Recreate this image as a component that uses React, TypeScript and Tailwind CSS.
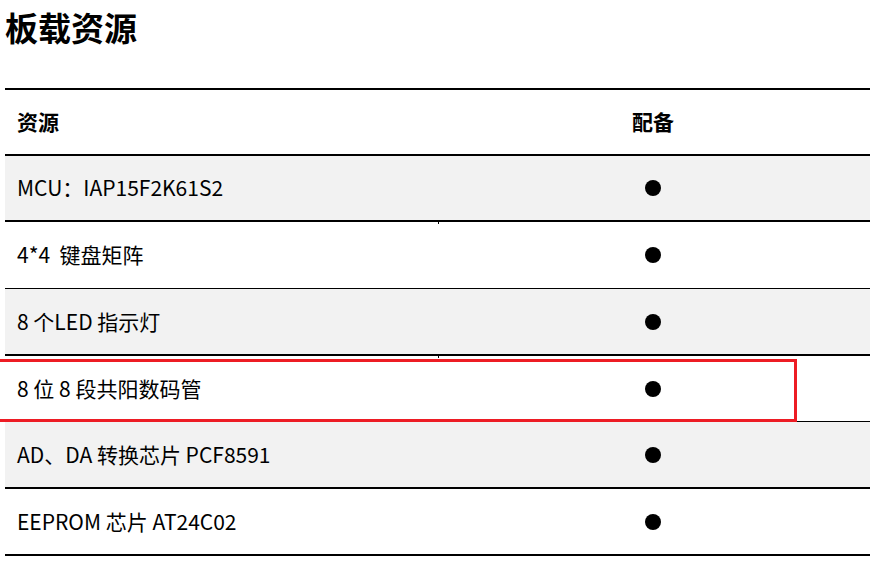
import React from 'react';

type Row = { name: string; h: string; border: string; bg: string };

const rows: Row[] = [
  { name: 'MCU：IAP15F2K61S2', h: 'h-[66px]', border: 'border-b-2', bg: 'bg-[#f2f2f2]' },
  { name: '4*4  键盘矩阵', h: 'h-[67px]', border: 'border-b', bg: 'bg-white' },
  { name: '8 个LED 指示灯', h: 'h-[67px]', border: 'border-b-2', bg: 'bg-[#f2f2f2]' },
  { name: '8 位 8 段共阳数码管', h: 'h-[66px]', border: 'border-b', bg: 'bg-white' },
  { name: 'AD、DA 转换芯片 PCF8591', h: 'h-[67px]', border: 'border-b-2', bg: 'bg-[#f2f2f2]' },
  { name: 'EEPROM 芯片 AT24C02', h: 'h-[67px]', border: 'border-b-2', bg: 'bg-white' },
];

export default function App() {
  return (
    <div
      className="relative w-[889px] h-[561px] overflow-hidden bg-white text-black"
      style={{ fontFamily: '"Noto Sans CJK SC", "Noto Sans", sans-serif' }}
    >
      <h1 className="pl-[5px] pt-[11px] text-[33px] leading-[33px] font-bold">板载资源</h1>

      <div className="ml-[5px] mt-[44px] w-[865px] border-t-2 border-black">
        <div className="flex h-[66px] items-center border-b-2 border-black text-[21px] font-bold">
          <div className="w-[615px] pl-[12px]">资源</div>
          <div className="pl-[12px]">配备</div>
        </div>
        {rows.map((r) => (
          <div
            key={r.name}
            className={`relative flex items-center border-black text-[21px] ${r.h} ${r.border} ${r.bg}`}
          >
            <div className="w-[615px] pl-[12px] whitespace-pre">{r.name}</div>
            <div className="pl-[12px]">
              <div className="ml-[13px] h-[16px] w-[16px] rounded-full bg-black" />
            </div>
            {r.border === 'border-b' && (
              <span className="absolute left-[433px] top-[-1px] h-[3px] w-px bg-black" />
            )}
          </div>
        ))}
      </div>

      {/* annotation box */}
      <div className="absolute left-[-3px] top-[359px] h-[63px] w-[800px] border-[3px] border-[#ed1c24]" />
    </div>
  );
}
